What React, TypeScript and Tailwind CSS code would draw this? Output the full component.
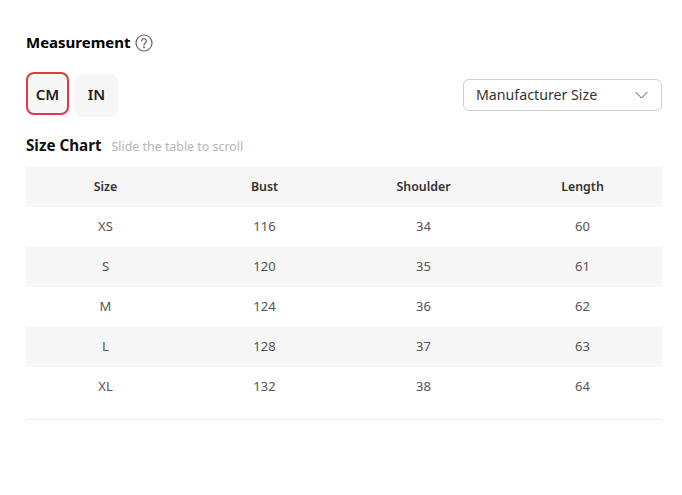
import React from 'react';

const rows = [
    ['XS', '116', '34', '60'],
    ['S', '120', '35', '61'],
    ['M', '124', '36', '62'],
    ['L', '128', '37', '63'],
    ['XL', '132', '38', '64'],
];

const headers = ['Size', 'Bust', 'Shoulder', 'Length'];

const App: React.FC = () => {
    return (
        <div className="w-[682px] h-[495px] bg-white pl-[26px] pr-[20px] pt-[32px] font-['Noto_Sans',sans-serif] text-[#222]">
            {/* Measurement title */}
            <div className="flex items-center gap-[4px] h-[22px]">
                <span className="text-[15px] leading-[20px] mb-[2px] font-bold text-black">Measurement</span>
                <svg className="mb-[1px]" width="18" height="18" viewBox="0 0 18 18" fill="none" stroke="#666" strokeWidth="1.2" strokeLinecap="round">
                    <circle cx="9" cy="9" r="8" />
                    <path d="M6.6 7.1a2.4 2.4 0 1 1 3.7 2c-.8.5-1.3 1-1.3 2" />
                    <circle cx="9" cy="13.2" r="0.4" />
                </svg>
            </div>

            {/* Unit buttons + select */}
            <div className="flex items-start justify-between mt-[18px]">
                <div className="flex items-start gap-[6px]">
                    <button className="w-[43px] h-[43px] pt-[2px] rounded-[8px] border-2 border-[#dc3c40] bg-[#f7f7f7] text-[15px] font-semibold text-[#222]">CM</button>
                    <button className="w-[43px] h-[43px] mt-[2px] pb-[2px] rounded-[8px] bg-[#f6f6f6] text-[15px] font-semibold text-[#222]">IN</button>
                </div>
                <div className="w-[199px] h-[32px] mt-[7px] rounded-[6px] border border-[#d0d0d0] flex items-center justify-between pl-[12px] pr-[13px]">
                    <span className="text-[14.2px] text-[#333]">Manufacturer Size</span>
                    <svg width="13" height="8" viewBox="0 0 13 8" fill="none" stroke="#555" strokeWidth="1">
                        <path d="M0.5 1l6 6 6-6" />
                    </svg>
                </div>
            </div>

            {/* Size chart */}
            <div className="flex items-baseline gap-[10px] mt-[17px] h-[24px]">
                <span className="text-[15.2px] font-bold text-[#111]">Size Chart</span>
                <span className="text-[12.4px] text-[#b5b5b5]">Slide the table to scroll</span>
            </div>

            <div className="mt-[9px] pb-[12px] border-b border-[#ececec]">
                <div className="grid grid-cols-4 h-[40px] items-center bg-[#f6f6f6] text-center text-[12.4px] font-semibold text-[#333]">
                    {headers.map((h) => (
                        <div key={h}>{h}</div>
                    ))}
                </div>
                {rows.map((row, i) => (
                    <div key={row[0]} className={i % 2 === 1 ? 'grid grid-cols-4 h-[40px] items-center bg-[#f6f6f6] text-center text-[13px] text-[#555]' : 'grid grid-cols-4 h-[40px] items-center text-center text-[13px] text-[#555]'}>
                        {row.map((c, j) => (
                            <div key={j}>{c}</div>
                        ))}
                    </div>
                ))}
            </div>
        </div>
    );
};

export default App;
